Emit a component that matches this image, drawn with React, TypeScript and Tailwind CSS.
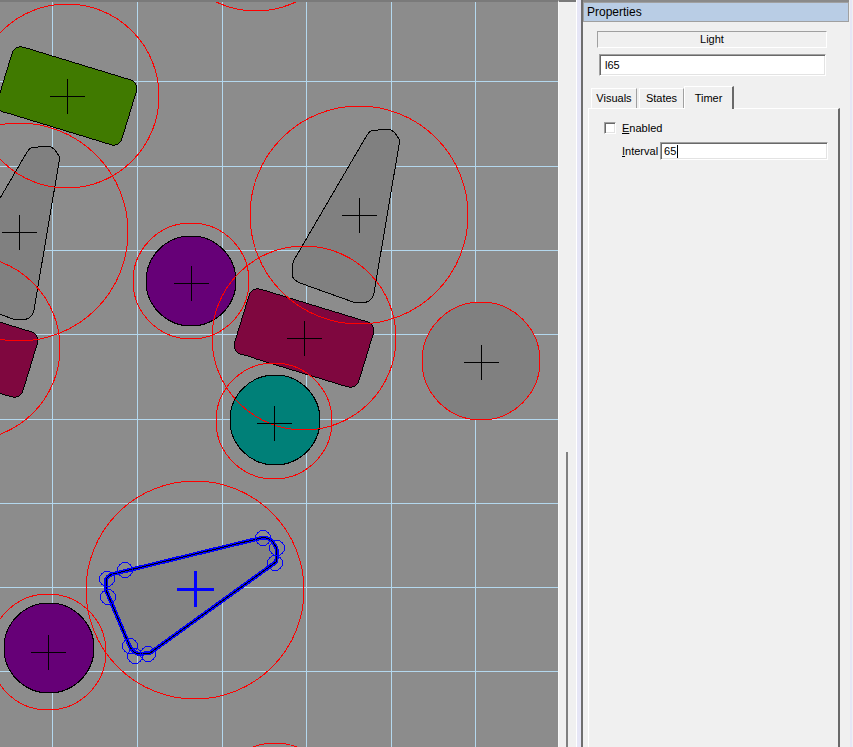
import React from 'react';

const FONT = { fontFamily: '"Liberation Sans", Arial, sans-serif' };

// grid positions measured off the canvas
const GRID_X = [52, 137, 222, 306, 391, 475];
const GRID_Y = [81, 166, 250, 334, 419, 503, 587, 671];

const TRAPEZOID =
  'M 12,-84 L 27,-86 Q 32,-86 36,-82 L 40,-76 Q 41,-73 40,-70 L 15,78 Q 14,83 10,86 L 5,88 L -6,87 L -59,68 Q -66,65 -67,60 L -67,52 Q -66,47 -65,45 L 8,-80 Q 10,-83 12,-84 Z';

const SELECTED =
  'M 106,590 L 106,580 Q 107,576 113,574 L 261,538 Q 268,537 272,541 L 276,547 Q 278,552 276,562 L 150,653 L 138,654 Q 133,652 130,647 Z';

const RECTS = [
  { x: 67, y: 96, fill: '#407a00' },
  { x: 304, y: 338, fill: '#7f073f' },
  { x: -32, y: 348, fill: '#7f073f' },
];

const DISCS = [
  { x: 191, y: 281, r: 45, fill: '#660077' },
  { x: 275, y: 420, r: 45, fill: '#008078' },
  { x: 481, y: 361, r: 59, fill: '#808080' },
  { x: 49, y: 648, r: 45, fill: '#660077' },
];

const BOUNDS = [
  [67, 96, 92],
  [19, 232, 109],
  [359, 215, 109],
  [191, 281, 58],
  [304, 338, 92],
  [-32, 348, 92],
  [274, 421, 58],
  [481, 361, 59],
  [48, 652, 58],
  [195, 590, 109],
  [256, -81, 92],
  [275, 801, 58],
];

const CROSSES = [
  [67, 96],
  [19, 232],
  [359, 215],
  [191, 283],
  [304, 338],
  [274, 423],
  [481, 362],
  [48, 652],
];

const HANDLES = [
  [125, 570],
  [107, 579],
  [108, 597],
  [263, 538],
  [277, 548],
  [275, 563],
  [130, 646],
  [135, 656],
  [148, 654],
];

function Canvas() {
  return (
    <div className="w-[558px] h-full border-t-2 border-[#7a7a7a] bg-[#8c8c8c] overflow-hidden">
      <svg width="558" height="745" viewBox="0 2 558 745" shapeRendering="crispEdges">
        {GRID_X.map((x) => (
          <line key={'gx' + x} x1={x + 0.5} y1={0} x2={x + 0.5} y2={747} stroke="#b4d8ee" />
        ))}
        {GRID_Y.map((y) => (
          <line key={'gy' + y} x1={0} y1={y + 0.5} x2={558} y2={y + 0.5} stroke="#b4d8ee" />
        ))}

        {/* shapes */}
        {RECTS.map((r, i) => (
          <rect
            key={'r' + i}
            x={-65}
            y={-34}
            width={130}
            height={68}
            rx={9}
            transform={`translate(${r.x},${r.y}) rotate(17)`}
            fill={r.fill}
            stroke="#000"
          />
        ))}
        <path d={TRAPEZOID} transform="translate(19,232)" fill="#808080" stroke="#000" />
        <path d={TRAPEZOID} transform="translate(359,215)" fill="#808080" stroke="#000" />
        {DISCS.map((d, i) => (
          <circle key={'d' + i} cx={d.x} cy={d.y} r={d.r} fill={d.fill} stroke="#000" />
        ))}

        {/* selected shape */}
        <path d={SELECTED} fill="#838383" stroke="#0000ff" strokeWidth={4} strokeLinejoin="round" />
        <path d={SELECTED} fill="none" stroke="#000" strokeWidth={1} />

        {/* bounding circles */}
        {BOUNDS.map(([x, y, r], i) => (
          <circle key={'b' + i} cx={x} cy={y} r={r} fill="none" stroke="#ff0000" />
        ))}

        {CROSSES.map(([x, y], i) => (
          <g key={'c' + i} stroke="#000">
            <line x1={x - 17} y1={y + 0.5} x2={x + 18} y2={y + 0.5} />
            <line x1={x + 0.5} y1={y - 17} x2={x + 0.5} y2={y + 18} />
          </g>
        ))}
        <g stroke="#0000ff" strokeWidth={3}>
          <line x1={177} y1={589} x2={214} y2={589} />
          <line x1={195.5} y1={571} x2={195.5} y2={607} />
        </g>
        {HANDLES.map(([x, y], i) => (
          <circle key={'h' + i} cx={x} cy={y} r={7.5} fill="none" stroke="#0000ff" />
        ))}
      </svg>
    </div>
  );
}

function PropertiesPanel() {
  return (
    <div className="w-[266px] h-full flex flex-col bg-[#f0f0f0] border-t-2 border-[#8a8a8a]" style={FONT}>
      <div className="h-[20px] flex items-center px-[3px] bg-[#b9cde5] border border-[#a0a0a0] text-[12px] text-black">
        Properties
      </div>

      <div className="ml-[14px] mt-[9px] w-[230px] h-[17px] flex items-center justify-center border border-t-[#a0a0a0] border-l-[#a0a0a0] border-b-white border-r-white text-[11px]">
        Light
      </div>

      <div className="ml-[16px] mt-[6px] w-[227px] h-[22px] flex items-center pl-[5px] bg-white border border-t-[#a0a0a0] border-l-[#a0a0a0] border-b-white border-r-white shadow-[inset_1px_1px_0_#696969,inset_-1px_-1px_0_#e3e3e3] text-[11px]">
        l65
      </div>

      <div className="ml-[8px] mt-[10px] flex items-end h-[22px] text-[11px]">
        <div className="w-[46px] h-[20px] flex items-center justify-center border-t border-l border-white border-r border-r-[#a0a0a0]">
          Visuals
        </div>
        <div className="ml-[2px] w-[45px] h-[20px] flex items-center justify-center border-t border-l border-white border-r border-r-[#a0a0a0]">
          States
        </div>
        <div className="w-[50px] h-[23px] -mb-[1px] flex items-start pt-[3px] justify-center bg-[#f0f0f0] border-t border-l border-white border-r-2 border-r-[#696969] relative z-10">
          Timer
        </div>
      </div>

      <div className="ml-[5px] w-[252px] flex-1 border-t border-l border-white border-r-2 border-r-[#696969] pt-[13px] text-[11px]">
        <div className="flex items-center pl-[15px] h-[12px]">
          <div className="w-[12px] h-[12px] bg-white border border-t-[#a0a0a0] border-l-[#a0a0a0] border-b-white border-r-white shadow-[inset_1px_1px_0_#696969,inset_-1px_-1px_0_#e3e3e3]" />
          <span className="ml-[6px]">
            <span className="underline">E</span>nabled
          </span>
        </div>
        <div className="flex items-center pl-[33px] mt-[8px] h-[18px]">
          <span>
            <span className="underline">I</span>nterval
          </span>
          <div className="ml-[2px] w-[168px] h-[18px] flex items-center pl-[3px] bg-white border border-t-[#a0a0a0] border-l-[#a0a0a0] border-b-white border-r-white shadow-[inset_1px_1px_0_#696969,inset_-1px_-1px_0_#e3e3e3]">
            65
            <span className="ml-[1px] w-px h-[13px] bg-black" />
          </div>
        </div>
      </div>
    </div>
  );
}

export default function App() {
  return (
    <div className="w-[853px] h-[747px] flex overflow-hidden bg-[#f0f0f0]">
      <Canvas />

      {/* strip beside the canvas */}
      <div className="w-[18px] h-full flex flex-col border-t-2 border-[#7a7a7a] border-l border-l-[#f8f8f8]">
        <div className="h-[450px]" />
        <div className="ml-[7px] w-[2px] flex-1 bg-[#808080]" />
      </div>

      {/* splitter */}
      <div className="w-[7px] h-full border-l border-white bg-[#e6e6f6] border-r-2 border-r-[#6e6e6e]" />

      <PropertiesPanel />

      <div className="w-[4px] h-full flex justify-end">
        <div className="w-[2px] h-full mr-[1px] bg-[#e6e6f6]" />
      </div>
    </div>
  );
}
